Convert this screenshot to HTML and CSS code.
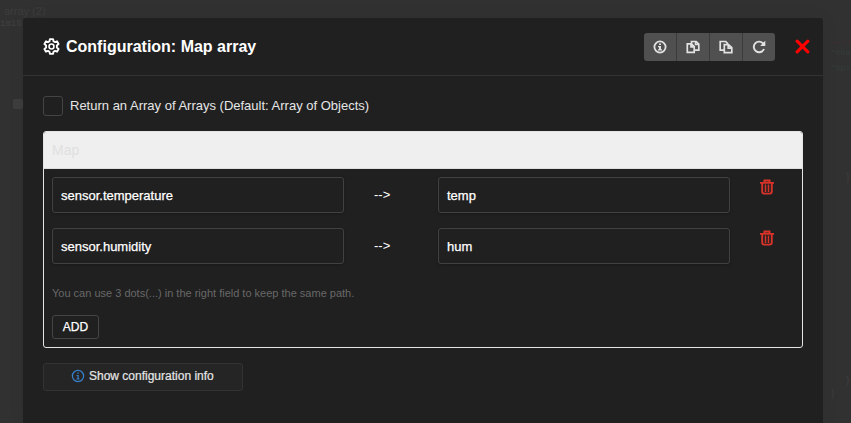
FILE: index.html
```
<!DOCTYPE html>
<html lang="en">
<head>
<meta charset="utf-8">
<title>Configuration: Map array</title>
<link rel="stylesheet" href="styles.css">
</head>
<body>
<svg class="defs" width="0" height="0" aria-hidden="true">
  <symbol id="info" viewBox="0 0 14 14"><circle cx="7" cy="7" r="5.6" fill="none" stroke="currentColor" stroke-width="1.8"/><path d="M6 3.4h2v1.7H6zM5 5.900h3v3.300h1v1.400H5V9.200h1V7.200H5z" fill="currentColor"/></symbol>
  <symbol id="trash" viewBox="0 0 14 16"><g fill="none" stroke="currentColor"><path d="M0 3.800h14" stroke-width="1.700"/><path d="M4.500 3.200V1.400h5v1.800" stroke-width="2"/><path d="M2.200 4v8.600q0 2 2 2h5.600q2 0 2-2V4" stroke-width="1.900"/><path d="M5.500 5.500v7.500M8.500 5.500v7.500" stroke-width="1.500"/></g></symbol>
</svg>
<div class="canvas">
  <span class="ghost g1">array (2)</span>
  <span class="ghost g2">1m15</span>
  <span class="ghost g3"></span>
  <span class="ghost g4"></span>
  <span class="ghost g5">"cha</span>
  <span class="ghost g6">"bpi</span>
  <span class="ghost g7">}</span>
  <span class="ghost g8">}</span>
  <span class="ghost g9">}</span>
</div>
<main class="modal">
  <header class="modal-header">
    <svg class="gear" viewBox="0 0 18 18"><g fill="none" stroke="currentColor" stroke-width="2" stroke-linejoin="round"><path d="M7.300 1.200h3.400l.4 2.200 1.600.9 2.100-.8 1.700 2.900-1.800 1.500v2.200l1.800 1.500-1.700 2.900-2.100-.8-1.600.9-.4 2.200H7.300l-.4-2.200-1.600-.9-2.100.8-1.700-2.900 1.800-1.500V7.900L1.500 6.400l1.700-2.900 2.100.8 1.600-.9z"/><circle cx="9" cy="9" r="2.600" stroke-width="1.700"/></g></svg>
    <h1>Configuration: Map array</h1>
    <div class="tools">
      <button aria-label="Info"><svg viewBox="0 0 14 14"><use href="#info"/></svg></button>
      <button aria-label="Copy"><svg viewBox="0 0 14 14"><g fill="none" stroke="currentColor" stroke-width="1.700"><path d="M5.500 3.700V1.500h4.700l2.600 2.600v6H8.600M9.600 1.500v3h3"/><path d="M1.300 3.900h4.200l2.700 2.700v5.800H1.300zM5 3.900v3h3"/></g></svg></button>
      <button aria-label="Paste"><svg viewBox="0 0 14 14"><g fill="none" stroke="currentColor" stroke-width="1.700"><path d="M5 10.200H1.200V1.500h5.500l1.800 1.800v1.200"/><path d="M5.300 4.600h4.200l3.300 3.100v4.900H5.300zM9.200 4.600v3.500h3.500"/></g></svg></button>
      <button aria-label="Reset"><svg viewBox="0 0 14 14"><path d="M11.300 3.700A5.300 5.300 0 1 0 12 9" fill="none" stroke="currentColor" stroke-width="1.900"/><path d="M13.300.7v5.200H8.100z" fill="currentColor"/></svg></button>
    </div>
    <button class="close" aria-label="Close"><svg viewBox="0 0 14 14"><path d="M2 2l10 10M12 2L2 12" stroke="currentColor" stroke-width="2.900" stroke-linecap="round"/></svg></button>
  </header>
  <div class="modal-body">
    <label class="option"><span class="box"></span><span class="option-text">Return an Array of Arrays (Default: Array of Objects)</span></label>
    <section class="panel">
      <h2>Map</h2>
      <div class="panel-body">
        <div class="row"><div class="field">sensor.temperature</div><span class="arrow">--&gt;</span><div class="field">temp</div><svg class="trash"><use href="#trash"/></svg></div>
        <div class="row"><div class="field">sensor.humidity</div><span class="arrow">--&gt;</span><div class="field">hum</div><svg class="trash"><use href="#trash"/></svg></div>
        <p>You can use 3 dots(...) in the right field to keep the same path.</p>
        <button class="add">ADD</button>
      </div>
    </section>
    <button class="show-info"><svg viewBox="0 0 14 14"><circle cx="7" cy="7" r="5.600" fill="none" stroke="currentColor" stroke-width="1.300"/><path d="M6.300 3.500h1.400v1.300H6.300zM5.500 6h2.200v3.600h.8v.9h-3v-.9h.9V6.900h-.9z" fill="currentColor"/></svg><span>Show configuration info</span></button>
  </div>
</main>
</body>
</html>
```
FILE: styles.css
```
* { box-sizing: border-box; }
body { margin: 0; height: 423px; overflow: hidden; background: #313131; color: #fff; font-family: "Liberation Sans", Arial, sans-serif; font-size: 13px; }
button { font: inherit; color: inherit; margin: 0; padding: 0; }
.defs { position: absolute; }
.canvas { position: absolute; inset: 0; overflow: hidden; }
.ghost { position: absolute; color: #3d3d3d; font-size: 11px; line-height: 12px; }
.g1 { left: 4px; top: 5px; }
.g2 { left: 0; top: 18px; font: bold 9px/12px "Liberation Mono", monospace; }
.g3 { left: 13px; top: 99px; width: 10px; height: 10px; border-radius: 2px; background: #3d3d3d; }
.g4 { left: 831px; top: 42px; width: 20px; height: 2px; border-top: 1px dashed #422e2e; }
.g5, .g6 { left: 831px; font: 8px/12px "Liberation Mono", monospace; color: #343d3b; }
.g5 { top: 47px; }
.g6 { top: 62px; }
.g7 { left: 846px; top: 171px; }
.g8 { left: 846px; top: 374px; }
.g9 { left: 831px; top: 387px; }
.modal { position: relative; width: 800px; height: 405px; margin: 18px 0 0 23px; background: #202020; border-radius: 3px 3px 0 0; box-shadow: 0 0 18px rgba(0, 0, 0, .06); }
.modal-header { display: flex; align-items: center; height: 58px; padding: 0 13px 0 20px; border-bottom: 1px solid #333; }
.gear { width: 17px; height: 17px; }
h1 { flex: 1; margin: 0 0 0 6px; font-size: 16px; line-height: 20px; }
.tools { display: flex; width: 131px; height: 28px; overflow: hidden; border-radius: 3px; background: #505050; }
.tools button { display: flex; flex: 1; align-items: center; justify-content: center; border: 0; border-right: 1px solid #3b3b3b; background: none; color: #e2e2e2; }
.tools button:last-child { border-right: 0; }
.tools svg { width: 14px; height: 14px; }
.close { display: flex; margin-left: 20px; border: 0; background: none; color: #f00; }
.close svg { width: 15px; height: 15px; }
.modal-body { padding: 20px; }
.option { display: flex; align-items: center; height: 20px; }
.box { width: 20px; height: 20px; border: 1px solid #444; border-radius: 3px; }
.option-text { margin-left: 7px; color: #e6e6e6; font-size: 13px; line-height: 18px; white-space: nowrap; }
.panel { height: 217px; margin-top: 15px; border: 1px solid #e4e4e4; border-radius: 3px; overflow: hidden; }
h2 { height: 37px; margin: 0; padding: 0 8px; border-bottom: 1px solid #ddd; background: #efefef; color: #e0e0e0; font-size: 14px; font-weight: 400; line-height: 36px; }
.panel-body { padding: 8px; }
.row { display: flex; height: 36px; margin-bottom: 15px; }
.field { width: 292px; height: 36px; padding: 0 8px; border: 1px solid #414141; border-radius: 3px; box-shadow: 0 1px 3px rgba(0, 0, 0, .2); line-height: 36px; -webkit-text-stroke: .25px #fff; }
.arrow { width: 94px; padding-left: 30px; line-height: 36px; }
.trash { width: 14px; height: 16px; margin: 2px 0 0 30px; color: #d93228; }
p { margin: 22px 0 0; color: #686868; font-size: 11px; line-height: 14px; }
.add { display: block; width: 47px; height: 24px; margin-top: 15px; border: 1px solid #454545; border-radius: 3px; background: none; font-size: 12px; line-height: 20px; -webkit-text-stroke: .25px #fff; }
.show-info { display: flex; align-items: center; width: 200px; height: 28px; margin-top: 15px; padding: 0 0 2px 27px; border: 1px solid #333; border-radius: 3px; background: #252525; color: #e6e6e6; font-size: 12px; -webkit-text-stroke: .2px #e6e6e6; }
.show-info svg { width: 14px; height: 14px; margin-right: 4px; color: #367fca; }
```
